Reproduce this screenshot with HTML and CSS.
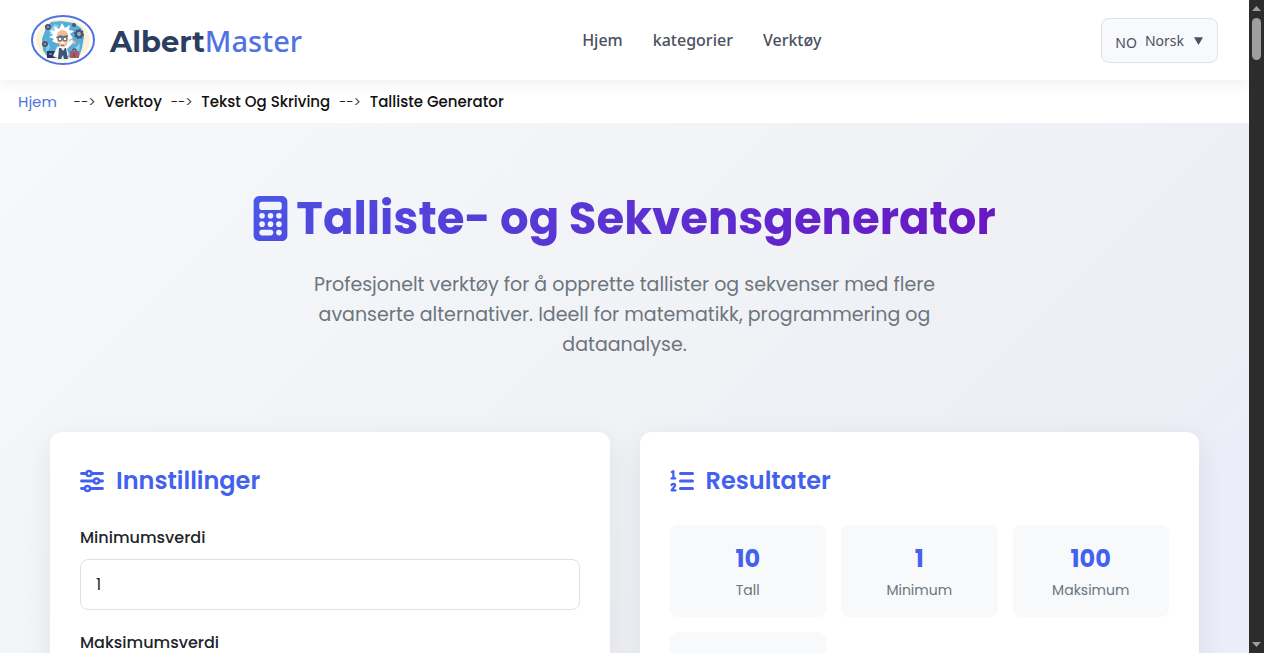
FILE: index.html
```html
<!DOCTYPE html>
<html lang="no">
<head>
  <meta charset="UTF-8">
  <meta name="viewport" content="width=device-width, initial-scale=1.0">
  <title>Talliste Generator</title>
  <link rel="stylesheet" href="styles.css">
</head>
<body>
  <div class="page">
    <!-- Header -->
    <header class="header">
      <a class="logo" href="#">
        <svg class="logo-img" viewBox="0 0 64 50" aria-hidden="true">
          <ellipse cx="32" cy="25" rx="31" ry="24" fill="#fffefa" stroke="#4f73e3" stroke-width="2"/>
          <ellipse cx="32" cy="25" rx="27" ry="21" fill="#fbf2dc"/>
          <path d="M15 13 20 7 30 6 43 8 50 13 53 22 51 33 48 42 17 43 12 35 11 24Z" fill="#56addb"/>
          <path d="M18 16l6-7 4 2-8 10zM44 13l5 5-3 3zM14 24l5 7-3 8zM44 33l5-5-1 10z" fill="#8bd0eb"/>
          <g fill="#e79b69" stroke="#455577" stroke-width="2">
            <circle cx="17" cy="12" r="2"/>
            <circle cx="43" cy="10" r="1"/>
            <circle cx="14" cy="29" r="2"/>
            <circle cx="48" cy="19" r="4" stroke-dasharray="2 1"/>
            <circle cx="48" cy="19" r="3"/>
          </g>
          <path d="M47 17h2v4h-2z" fill="#78bae0"/>
          <path d="M16 36h11v7H16z" fill="#26385f"/>
          <path d="M18 38h3v2h-3zM24 38h2v3h-2z" fill="#527bad"/>
          <path d="M39 36h9v7h-9z" fill="#a65d68"/>
          <path d="M42 36v-2h3v2M43 38v4" fill="none" stroke="#573e59"/>
          <path d="M26 32l-4 9 4 2h9l3-3-2-6 7-7-2-3-7 6-5 1z" fill="#f8fafc" stroke="#a7bdcc" stroke-width=".5"/>
          <path d="M28 33h7l2 11h-4l-1-4-2 4h-3z" fill="#3d5777"/>
          <path d="M30 33l2 3 2-3z" fill="#eef3f7"/>
          <path d="M42 27l-1-3 3 2 1 2-2 2z" fill="#efb080"/>
          <path d="M25 28l-4-2 2-2-5-2 4-2-3-5 5 1-1-5 5 3 3-6 3 5 5-3-1 5 5 1-4 3 3 4-4 2 1 3-5 1z" fill="#fff"/>
          <path d="M26 21q0-5 5-6 6 0 6 6v5q-1 6-5 6-5-1-6-7z" fill="#f2bc94"/>
          <path d="M25 22l5-2 2 1 5-1v2l-5 1-2-1-5 1z" fill="#66768c"/>
          <circle cx="29" cy="24" r="2" fill="#f4fafa" stroke="#384b63"/>
          <circle cx="34" cy="24" r="2" fill="#f4fafa" stroke="#384b63"/>
          <path d="M28 28q3-2 7 0l-3 1z" fill="#fff"/>
          <path d="M30 30q2 1 3 0" fill="none" stroke="#965047"/>
        </svg>
        <span class="logo-text"><b>Albert</b>Master</span>
      </a>
      <nav class="nav">
        <a href="#">Hjem</a>
        <a href="#">kategorier</a>
        <a href="#">Verktøy</a>
      </nav>
      <button class="lang" type="button">
        <span class="lang-flag">NO</span>
        <span>Norsk</span>
        <svg class="lang-arrow" viewBox="0 0 8 8" aria-hidden="true"><path d="M0 1h8L4 8z" fill="currentColor"/></svg>
      </button>
    </header>

    <!-- Breadcrumb -->
    <nav class="breadcrumb" aria-label="breadcrumb">
      <a href="#">Hjem</a>
      <span class="sep sep-first">--&gt;</span>
      <span>Verktoy</span>
      <span class="sep">--&gt;</span>
      <span>Tekst Og Skriving</span>
      <span class="sep">--&gt;</span>
      <span>Talliste Generator</span>
    </nav>

    <main class="main">
      <section class="hero">
        <h1>
          <svg class="hero-icon" viewBox="0 0 384 512" aria-hidden="true">
            <defs>
              <linearGradient id="calc" x1="0" y1="0" x2="1" y2="1">
                <stop offset="0" stop-color="#4a58e8"/>
                <stop offset="1" stop-color="#4d4de0"/>
              </linearGradient>
            </defs>
            <path fill="url(#calc)" d="M64 0C28.700 0 0 28.700 0 64V448c0 35.300 28.700 64 64 64H320c35.300 0 64-28.700 64-64V64c0-35.300-28.700-64-64-64H64z"/>
            <g fill="#f3f4f9">
              <rect x="64" y="64" width="256" height="96" rx="32"/>
              <circle cx="96" cy="224" r="32"/><circle cx="192" cy="224" r="32"/><circle cx="288" cy="224" r="32"/>
              <circle cx="96" cy="320" r="32"/><circle cx="192" cy="320" r="32"/><circle cx="288" cy="320" r="32"/>
              <rect x="64" y="384" width="160" height="64" rx="32"/><circle cx="288" cy="416" r="32"/>
            </g>
          </svg>
          <span class="hero-title">Talliste- og Sekvensgenerator</span>
        </h1>
        <p>Profesjonelt verktøy for å opprette tallister og sekvenser med flere avanserte alternativer. Ideell for matematikk, programmering og dataanalyse.</p>
      </section>

      <div class="cards">
        <section class="card">
          <h2>
            <svg class="card-icon" viewBox="0 0 512 512" fill="none" stroke="currentColor" stroke-width="60" stroke-linecap="round" aria-hidden="true">
              <path d="M32 96H128M256 96H480M32 256H288M416 256H480M32 416H96M224 416H480"/>
              <circle cx="192" cy="96" r="54" stroke-width="52"/>
              <circle cx="352" cy="256" r="54" stroke-width="52"/>
              <circle cx="160" cy="416" r="54" stroke-width="52"/>
            </svg>
            Innstillinger
          </h2>
          <form>
            <label for="minValue">Minimumsverdi</label>
            <input type="text" inputmode="numeric" id="minValue" name="minValue" value="1">
            <label for="maxValue">Maksimumsverdi</label>
            <input type="text" inputmode="numeric" id="maxValue" name="maxValue">
          </form>
        </section>

        <section class="card">
          <h2>
            <svg class="card-icon" viewBox="0 0 512 512" fill="none" stroke="currentColor" stroke-linecap="round" stroke-linejoin="round" aria-hidden="true">
              <path d="M224 96H480M224 256H480M224 416H480" stroke-width="64"/>
              <path d="M40 64L72 48V192M32 200H112" stroke-width="48"/>
              <path d="M32 342C48 304 112 306 108 350C106 378 60 410 36 456H116" stroke-width="48"/>
            </svg>
            Resultater
          </h2>
          <div class="stats">
            <div class="stat">
              <div class="stat-value">10</div>
              <div class="stat-label">Tall</div>
            </div>
            <div class="stat">
              <div class="stat-value">1</div>
              <div class="stat-label">Minimum</div>
            </div>
            <div class="stat">
              <div class="stat-value">100</div>
              <div class="stat-label">Maksimum</div>
            </div>
            <div class="stat"></div>
          </div>
        </section>
      </div>
    </main>
  </div>

  <!-- Scroll track -->
  <div class="scrollbar" aria-hidden="true">
    <svg class="scroll-arrow" viewBox="0 0 9 5"><path d="M0 5 4.500 0 9 5z"/></svg>
    <div class="scroll-thumb"></div>
    <svg class="scroll-arrow scroll-down" viewBox="0 0 9 5"><path d="M0 0h9L4.500 5z"/></svg>
  </div>
</body>
</html>
```
FILE: styles.css
```css
* {
  box-sizing: border-box;
}
body {
  margin: 0;
  height: 100vh;
  display: flex;
  overflow: hidden;
  font-family: Poppins, Inter, sans-serif;
  font-size: 16px;
  color: #212529;
}
a {
  text-decoration: none;
}
.page {
  flex: 1;
  min-width: 0;
  background: #fff;
}
.header {
  display: flex;
  justify-content: space-between;
  align-items: center;
  height: 80px;
  padding: 0 31px;
  background: #fff;
  box-shadow: 0 2px 15px rgba(0, 0, 0, 0.08);
  font-family: "Noto Sans", sans-serif;
}
.logo {
  display: flex;
  align-items: center;
  gap: 15px;
}
.logo-img {
  width: 64px;
  height: 50px;
}
.logo-text {
  font-size: 29px;
  font-weight: 500;
  color: #4f73e3;
}
.logo-text b {
  font-family: Montserrat, Poppins, sans-serif;
  font-weight: 700;
  color: #2c3e60;
}
.nav {
  display: flex;
  gap: 30px;
}
.nav a {
  font-weight: 500;
  color: #4b5160;
}
.lang {
  display: flex;
  align-items: center;
  gap: 8px;
  height: 45px;
  padding: 0 14px 0 13px;
  border: 1px solid #dee2e6;
  border-radius: 8px;
  background: #f8f9fc;
  font-family: "Noto Sans", sans-serif;
  font-size: 14px;
  color: #4b5160;
}
.lang-flag {
  padding-top: 4px;
}
.lang-arrow {
  width: 9px;
  height: 9px;
  margin-left: 2px;
}
.breadcrumb {
  display: flex;
  align-items: center;
  gap: 9px;
  height: 43px;
  padding: 0 18px;
  font-size: 15px;
  font-weight: 500;
  color: #111;
}
.breadcrumb a {
  font-weight: 400;
  color: #4f73e3;
}
.sep {
  padding-top: 2px;
  font-size: 14px;
  font-weight: 300;
}
.sep-first {
  margin-left: 8px;
}
.main {
  min-height: 2200px;
  padding: 64px 50px;
  background: linear-gradient(135deg, #f6f8fb 0, #eeeff4 960px, #ebeef8 1100px);
}
.hero {
  text-align: center;
}
.hero h1 {
  display: flex;
  align-items: center;
  justify-content: center;
  gap: 8px;
  margin: 0 0 20px;
  font-size: 45px;
  font-weight: 700;
  line-height: 63px;
}
.hero-icon {
  width: 35px;
  height: 45px;
}
.hero-title {
  background: linear-gradient(135deg, #4d4de0, #6a15c2);
  -webkit-background-clip: text;
  background-clip: text;
  color: transparent;
}
.hero p {
  max-width: 700px;
  margin: 0 auto 72px;
  font-size: 19px;
  line-height: 30px;
  color: #6c757d;
}
.cards {
  display: grid;
  grid-template-columns: 1fr 1fr;
  gap: 30px;
}
.card {
  padding: 30px;
  border-radius: 12px;
  background: #fff;
  box-shadow: 0 8px 30px rgba(0, 0, 0, 0.08);
}
.card h2 {
  display: flex;
  align-items: center;
  gap: 12px;
  margin: 0 0 25px;
  font-size: 24px;
  font-weight: 600;
  line-height: 38px;
  color: #4361ee;
}
.card-icon {
  width: 24px;
  height: 24px;
}
.card label {
  display: block;
  margin-bottom: 9px;
  font-weight: 500;
  line-height: 25px;
}
.card input {
  display: block;
  width: 100%;
  height: 51px;
  margin-bottom: 20px;
  padding: 0 15px;
  border: 1px solid #dee2e6;
  border-radius: 8px;
  font: inherit;
  color: inherit;
}
.stats {
  display: grid;
  grid-template-columns: repeat(3, 1fr);
  gap: 15px;
}
.stat {
  min-height: 92px;
  padding: 15px;
  border-radius: 8px;
  background: #f8f9fb;
  text-align: center;
}
.stat-value {
  font-size: 24px;
  font-weight: 700;
  line-height: 38px;
  color: #4361ee;
}
.stat-label {
  font-size: 14px;
  line-height: 24px;
  color: #6c757d;
}
.scrollbar {
  display: flex;
  flex-direction: column;
  align-items: center;
  flex: 0 0 15px;
  padding: 6px 0;
  background: #2c2c2c;
}
.scroll-arrow {
  width: 9px;
  height: 5px;
  fill: #9f9fa2;
}
.scroll-thumb {
  width: 9px;
  height: 42px;
  margin-top: 7px;
  border-radius: 5px;
  background: #9f9fa2;
}
.scroll-down {
  margin-top: auto;
}
```
